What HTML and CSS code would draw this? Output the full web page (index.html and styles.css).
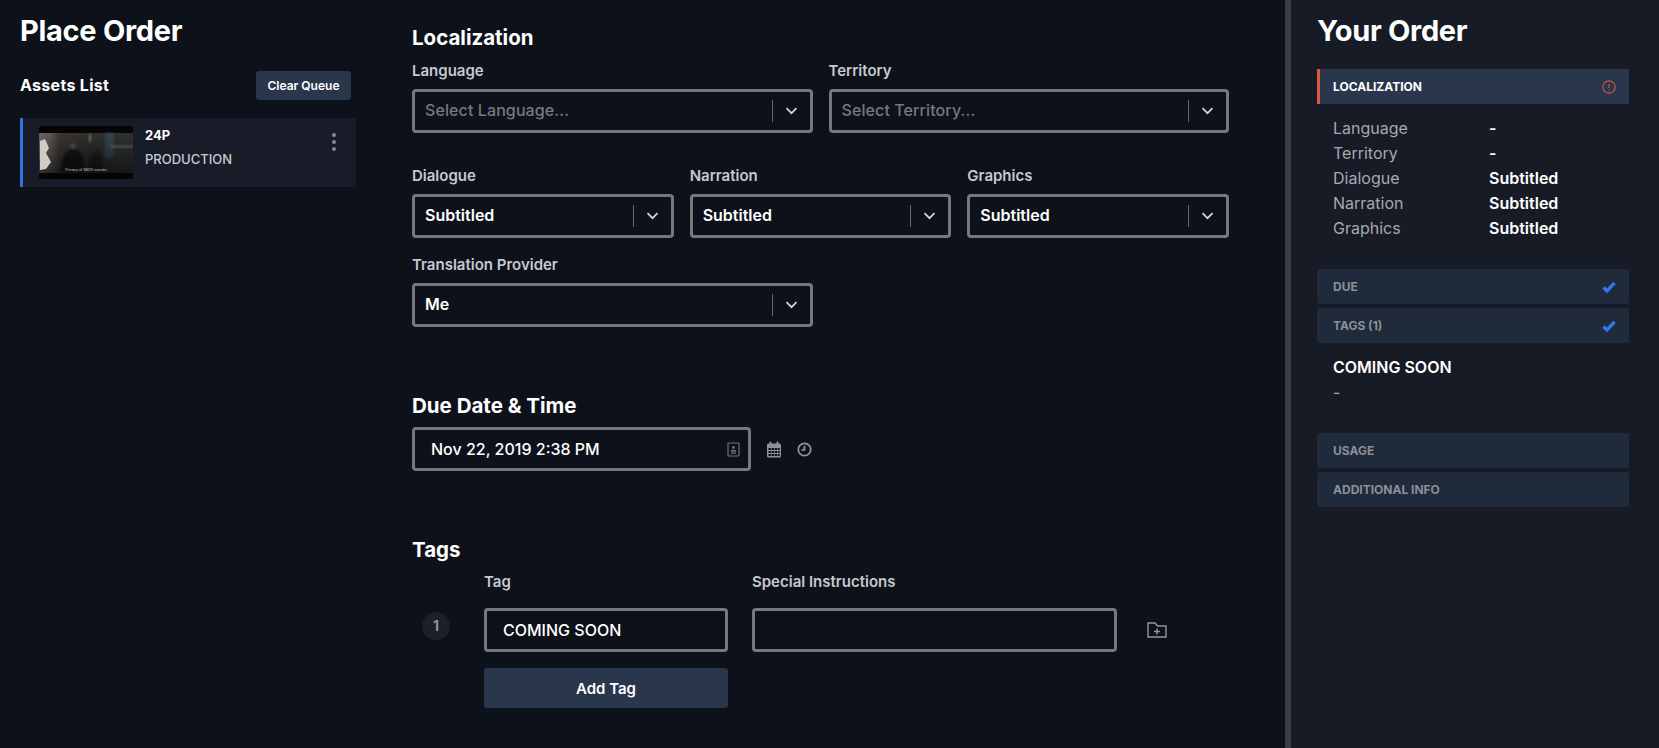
FILE: index.html
```html
<!DOCTYPE html>
<html lang="en">
<head>
<meta charset="utf-8">
<title>Place Order</title>
<link rel="stylesheet" href="styles.css">
</head>
<body>
<div class="app">
  <aside class="assets">
    <h1 class="page-title">Place Order</h1>
    <div class="assets-head">
      <h2 class="assets-title">Assets List</h2>
      <button class="btn btn-small">Clear Queue</button>
    </div>
    <div class="asset-card">
      <svg class="thumb" viewBox="0 0 94 53" aria-hidden="true">
        <defs>
          <linearGradient id="scene" x1="0" x2="1" y1="0" y2="0">
            <stop offset="0" stop-color="#6a6864"/>
            <stop offset="0.12" stop-color="#5b5855"/>
            <stop offset="0.22" stop-color="#3a3633"/>
            <stop offset="0.55" stop-color="#302d2a"/>
            <stop offset="0.75" stop-color="#2a3236"/>
            <stop offset="1" stop-color="#33302e"/>
          </linearGradient>
          <linearGradient id="shade" x1="0" x2="0" y1="0" y2="1">
            <stop offset="0" stop-color="#000" stop-opacity="0"/>
            <stop offset="1" stop-color="#000" stop-opacity="0.55"/>
          </linearGradient>
          <filter id="soft"><feGaussianBlur stdDeviation="1"/></filter>
          <filter id="softer"><feGaussianBlur stdDeviation="0.6"/></filter>
        </defs>
        <rect width="94" height="53" fill="#050505"/>
        <rect y="7" width="94" height="40" fill="url(#scene)"/>
        <g filter="url(#soft)">
          <path d="M22 46 L24 30 L32 22 L40 24 L45 34 L47 46Z" fill="#171614"/>
          <path d="M48 46 L50 30 L58 24 L64 32 L64 46Z" fill="#1b1f22"/>
          <circle cx="34" cy="20" r="2.6" fill="#5a554f"/>
          <rect x="66" y="7" width="9" height="24" fill="#34454e"/>
          <rect x="50" y="8" width="2" height="8" fill="#7a7670"/>
          <rect x="72" y="20" width="22" height="1.2" fill="#8a8680"/>
        </g>
        <rect y="7" width="94" height="40" fill="url(#shade)"/>
        <path filter="url(#softer)" d="M1 15 L6 13 L10 22 L7 27 L12 36 L7 43 L1 44Z" fill="#cfcbc5"/>
        <text class="thumb-caption" x="47" y="44.5" text-anchor="middle">Privacy of BBDO movies</text>
      </svg>
      <div class="asset-text">
        <div class="asset-format">24P</div>
        <div class="asset-type">PRODUCTION</div>
      </div>
      <div class="kebab"><i></i><i></i><i></i></div>
    </div>
  </aside>

  <main class="form">
    <h2 class="section-title">Localization</h2>
    <div class="grid-2">
      <div class="field">
        <label class="label">Language</label>
        <div class="select placeholder"><span class="select-value">Select Language...</span><span class="sep"></span><svg class="chev" viewBox="0 0 13 8"><path d="M1.5 1.2 L6.5 6.2 L11.5 1.2"/></svg></div>
      </div>
      <div class="field">
        <label class="label">Territory</label>
        <div class="select placeholder"><span class="select-value">Select Territory...</span><span class="sep"></span><svg class="chev" viewBox="0 0 13 8"><path d="M1.5 1.2 L6.5 6.2 L11.5 1.2"/></svg></div>
      </div>
    </div>
    <div class="grid-3">
      <div class="field">
        <label class="label">Dialogue</label>
        <div class="select"><span class="select-value">Subtitled</span><span class="sep"></span><svg class="chev" viewBox="0 0 13 8"><path d="M1.5 1.2 L6.5 6.2 L11.5 1.2"/></svg></div>
      </div>
      <div class="field">
        <label class="label">Narration</label>
        <div class="select"><span class="select-value">Subtitled</span><span class="sep"></span><svg class="chev" viewBox="0 0 13 8"><path d="M1.5 1.2 L6.5 6.2 L11.5 1.2"/></svg></div>
      </div>
      <div class="field">
        <label class="label">Graphics</label>
        <div class="select"><span class="select-value">Subtitled</span><span class="sep"></span><svg class="chev" viewBox="0 0 13 8"><path d="M1.5 1.2 L6.5 6.2 L11.5 1.2"/></svg></div>
      </div>
    </div>
    <div class="grid-2 provider">
      <div class="field">
        <label class="label">Translation Provider</label>
        <div class="select"><span class="select-value">Me</span><span class="sep"></span><svg class="chev" viewBox="0 0 13 8"><path d="M1.5 1.2 L6.5 6.2 L11.5 1.2"/></svg></div>
      </div>
    </div>

    <h2 class="section-title section-gap">Due Date &amp; Time</h2>
    <div class="date-row">
      <div class="date-input">
        <span>Nov 22, 2019 2:38 PM</span>
        <svg class="contact" viewBox="0 0 13 15"><rect x="1" y="1" width="11" height="13" rx="1"/><circle class="fill" cx="6.5" cy="5.5" r="1.4"/><rect class="fill" x="4" y="8" width="5" height="1.6"/><rect class="fill" x="4" y="10.5" width="5" height="1.2"/></svg>
      </div>
      <svg class="calendar" viewBox="0 0 16 17">
        <rect class="fill" x="1" y="2.5" width="14" height="14" rx="1.5"/>
        <rect class="fill" x="3.5" y="0.5" width="2" height="4" rx="1"/>
        <rect class="fill" x="10.5" y="0.5" width="2" height="4" rx="1"/>
        <g class="holes"><rect x="2.5" y="7" width="2.4" height="2"/><rect x="5.6" y="7" width="2.4" height="2"/><rect x="8.7" y="7" width="2.4" height="2"/><rect x="11.7" y="7" width="2" height="2"/><rect x="2.5" y="10" width="2.4" height="2"/><rect x="5.6" y="10" width="2.4" height="2"/><rect x="8.7" y="10" width="2.4" height="2"/><rect x="11.7" y="10" width="2" height="2"/><rect x="2.5" y="13" width="2.4" height="2"/><rect x="5.6" y="13" width="2.4" height="2"/><rect x="8.7" y="13" width="2.4" height="2"/><rect x="11.7" y="13" width="2" height="2"/></g>
      </svg>
      <svg class="clock" viewBox="0 0 15 15"><circle cx="7.5" cy="7.5" r="6.2"/><path d="M7.5 3.8 V7.8 H4.6"/></svg>
    </div>

    <h2 class="section-title section-gap">Tags</h2>
    <div class="tag-layout">
      <div class="tag-num">1</div>
      <div class="tag-col">
        <label class="label">Tag</label>
        <div class="text-input">COMING SOON</div>
        <button class="btn btn-large">Add Tag</button>
      </div>
      <div class="instr-col">
        <label class="label">Special Instructions</label>
        <div class="text-input"></div>
      </div>
      <svg class="folder" viewBox="0 0 20 16"><path d="M1 15 V1 H8 L10.5 4 H19 V15 Z"/><path d="M10 6.5 V12.5 M7 9.5 H13"/></svg>
    </div>
  </main>

  <div class="divider"></div>

  <aside class="summary">
    <h1 class="page-title">Your Order</h1>
    <div class="acc acc-active">
      <span>LOCALIZATION</span>
      <svg class="alert" viewBox="0 0 14 14"><circle cx="7" cy="7" r="6.2"/><path d="M7 3.4 V8"/><path d="M7 9.8 V10.8"/></svg>
    </div>
    <dl class="details">
      <dt>Language</dt><dd>-</dd>
      <dt>Territory</dt><dd>-</dd>
      <dt>Dialogue</dt><dd>Subtitled</dd>
      <dt>Narration</dt><dd>Subtitled</dd>
      <dt>Graphics</dt><dd>Subtitled</dd>
    </dl>
    <div class="acc">
      <span>DUE</span>
      <svg class="check" viewBox="0 0 14 12"><path d="M1.5 6.5 L5 10 L12.5 1.8"/></svg>
    </div>
    <div class="acc">
      <span>TAGS (1)</span>
      <svg class="check" viewBox="0 0 14 12"><path d="M1.5 6.5 L5 10 L12.5 1.8"/></svg>
    </div>
    <div class="tag-summary">
      <div class="tag-name">COMING SOON</div>
      <div class="tag-dash">-</div>
    </div>
    <div class="acc"><span>USAGE</span></div>
    <div class="acc"><span>ADDITIONAL INFO</span></div>
  </aside>
</div>
</body>
</html>
```

FILE: styles.css
```css
* { box-sizing: border-box; }
html, body { margin: 0; height: 748px; overflow: hidden; }
body { background: #0d1119; color: #fff; font-family: Inter, "Liberation Sans", sans-serif; font-size: 16px; }
h1, h2, dl, dd { margin: 0; }

.app { display: flex; height: 748px; }

.assets { width: 412px; flex: none; padding: 0 56px 0 20px; }
.page-title { font-size: 29px; line-height: 34px; font-weight: 700; letter-spacing: -0.3px; padding-top: 14px; }
.assets-head { display: flex; justify-content: space-between; align-items: center; margin-top: 23px; padding-right: 5px; }
.assets-title { font-size: 16px; line-height: 29px; font-weight: 700; letter-spacing: 0.3px; }
.btn { border: 0; background: #2a364c; color: #fff; font-family: inherit; border-radius: 3px; }
.btn-small { width: 95px; height: 29px; font-size: 12px; font-weight: 600; padding: 0; }
.asset-card { display: flex; margin-top: 18px; height: 69px; background: #171c28; border-left: 3px solid #2f72e0; padding: 8px 0 0 16px; position: relative; }
.thumb { width: 94px; height: 53px; flex: none; border-radius: 2px; display: block; }
.thumb-caption { font-family: Inter, sans-serif; font-size: 3.6px; fill: #c8c8c8; }
.asset-text { margin-left: 12px; }
.asset-format { font-size: 13px; line-height: 16px; font-weight: 700; margin-top: 1px; }
.asset-type { font-size: 13px; line-height: 16px; font-weight: 500; color: #c9ccd2; margin-top: 8px; }
.kebab { position: absolute; right: 20px; top: 15px; display: flex; flex-direction: column; gap: 3px; }
.kebab i { display: block; width: 4px; height: 4px; border-radius: 50%; background: #83868e; }

.form { width: 873px; flex: none; padding-top: 26px; }
.section-title { font-size: 20.5px; line-height: 24px; font-weight: 700; }
.section-gap { margin-top: 67px; }
.grid-2 { display: grid; grid-template-columns: 1fr 1fr; gap: 16px; width: 817px; margin-top: 12px; }
.grid-3 { display: grid; grid-template-columns: 1fr 1fr 1fr; gap: 16px; width: 817px; margin-top: 34px; }
.provider { margin-top: 18px; }
.label { display: block; font-size: 15px; line-height: 18px; font-weight: 600; color: #c6c9cf; }
.select { display: flex; align-items: center; height: 44px; margin-top: 9px; border: 3px solid #76787c; border-radius: 4px; padding-left: 10px; background: #0d1119; }
.select-value { flex: 1; font-size: 16px; font-weight: 600; color: #fff; padding-bottom: 2px; }
.placeholder .select-value { color: #76797f; font-weight: 500; letter-spacing: 0.1px; }
.sep { width: 1px; height: 22px; background: #63666c; }
.chev { width: 13px; height: 8px; margin: 0 12px 0 12px; fill: none; stroke: #d4d6da; stroke-width: 1.7; }

.date-row { display: flex; align-items: center; margin-top: 9px; }
.date-input { display: flex; align-items: center; justify-content: space-between; width: 339px; height: 44px; border: 3px solid #76787c; border-radius: 4px; padding: 0 8px 0 16px; font-size: 16px; font-weight: 500; }
.contact { width: 13px; height: 15px; fill: none; stroke: #6f7278; stroke-width: 1.2; }
.contact .fill { fill: #6f7278; stroke: none; }
.calendar { width: 16px; height: 17px; margin-left: 15px; }
.calendar .fill { fill: #8e9197; }
.calendar .holes { fill: #0d1119; }
.clock { width: 15px; height: 15px; margin-left: 15px; fill: none; stroke: #8e9197; stroke-width: 1.8; }

.tag-layout { display: flex; align-items: flex-start; margin-top: 11px; }
.tag-num { width: 28px; height: 28px; margin: 39px 0 0 10px; border-radius: 50%; background: #1c202b; color: #8e9197; font-size: 14px; font-weight: 700; line-height: 28px; text-align: center; flex: none; }
.tag-col { width: 244px; margin-left: 34px; }
.instr-col { width: 365px; margin-left: 24px; }
.text-input { height: 44px; margin-top: 17px; border: 3px solid #76787c; border-radius: 4px; padding-left: 16px; line-height: 38px; font-size: 16px; font-weight: 500; }
.btn-large { display: block; width: 100%; height: 40px; margin-top: 16px; font-size: 15px; font-weight: 600; }
.folder { width: 20px; height: 16px; margin: 49px 0 0 30px; fill: none; stroke: #93969c; stroke-width: 1.4; flex: none; }

.divider { width: 6px; flex: none; background: #3a3c43; }

.summary { flex: 1; background: #161b26; padding: 0 30px 0 26px; }
.summary .page-title { margin-bottom: 21px; }
.acc { display: flex; align-items: center; justify-content: space-between; height: 35px; margin-bottom: 4px; padding: 0 13px 0 16px; background: #1f2a3a; color: #8b8f98; font-size: 12px; font-weight: 700; border-radius: 2px; }
.acc-active { background: #2a364c; color: #fff; border-left: 3px solid #d85a42; padding-left: 13px; border-radius: 0; margin-bottom: 0; }
.alert { width: 14px; height: 14px; fill: none; stroke: #c9553f; stroke-width: 1.2; }
.check { width: 14px; height: 12px; fill: none; stroke: #2f78ea; stroke-width: 3.4; }
.details { display: grid; grid-template-columns: 156px 1fr; grid-auto-rows: 25px; align-content: start; padding: 12px 16px 0; height: 165px; font-size: 16px; line-height: 25px; }
.details dt { color: #a6a9af; font-weight: 400; }
.details dd { font-weight: 600; }
.tag-summary { height: 86px; padding: 8px 16px 0; }
.tag-name { font-size: 16px; line-height: 24px; font-weight: 600; }
.tag-dash { font-size: 16px; line-height: 24px; margin-top: 1px; color: #a0a3a9; }
```
